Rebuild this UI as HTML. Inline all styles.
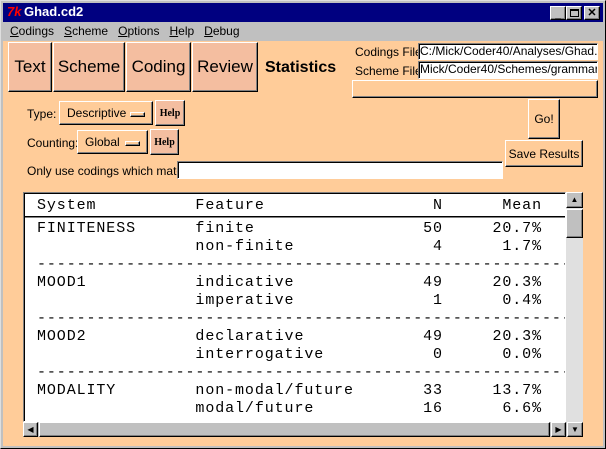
<!DOCTYPE html>
<html><head><style>
*{margin:0;padding:0;box-sizing:border-box}
body{width:606px;height:449px;background:#c0c0c0;position:relative;overflow:hidden;font-family:"Liberation Sans",sans-serif;font-size:12px}
.a{position:absolute}
.r{border:1px solid;border-color:#fff #000 #000 #fff;box-shadow:inset -1px -1px 0 #808080}
.s{border:1px solid;border-color:#808080 #fff #fff #808080;box-shadow:inset 1px 1px 0 #000}
.tab{background:#f4bea0;font-size:17px;display:flex;align-items:center;justify-content:center;color:#000}
.btn{background:#ffcc99;display:flex;align-items:center;justify-content:center}
.mono{font-family:"Liberation Mono",monospace;font-size:15px;letter-spacing:0.9px;white-space:pre}
.in{background:#fff;overflow:hidden;white-space:nowrap;font-size:12px;padding-left:1px;line-height:15px}
</style></head><body>
<div class="a" style="left:0;top:0;width:606px;height:449px;border:1px solid;border-color:#dfdfdf #000 #000 #dfdfdf"></div>
<div class="a" style="left:3px;top:3px;width:600px;height:19px;background:#000080"></div>
<div class="a" style="left:7px;top:4px;color:#f00;font-weight:bold;font-size:13px;font-style:italic">7k</div>
<div class="a" style="left:24px;top:4px;color:#fff;font-weight:bold;font-size:13px">Ghad.cd2</div>
<div class="a r" style="left:550px;top:6px;width:16px;height:14px;background:#c0c0c0;font-size:10px;text-align:center;font-weight:bold;line-height:16px">_</div>
<div class="a r" style="left:566px;top:6px;width:16px;height:14px;background:#c0c0c0"><div class="a" style="left:3px;top:2px;width:9px;height:8px;border:1px solid #000;border-top-width:2px"></div></div>
<div class="a r" style="left:584px;top:6px;width:16px;height:14px;background:#c0c0c0;font-size:11px;text-align:center;font-weight:bold;line-height:12px">✕</div>
<div class="a" style="left:10px;top:24px;font-size:12px;word-spacing:0"><u>C</u>odings&nbsp;&nbsp; <u>S</u>cheme&nbsp;&nbsp; <u>O</u>ptions&nbsp;&nbsp; <u>H</u>elp&nbsp;&nbsp; <u>D</u>ebug</div>
<div class="a" style="left:3px;top:41px;width:600px;height:405px;background:#ffcc99"></div>
<div class="a tab r" style="left:8px;top:42px;width:44px;height:50px">Text</div>
<div class="a tab r" style="left:53px;top:42px;width:72px;height:50px">Scheme</div>
<div class="a tab r" style="left:126px;top:42px;width:65px;height:50px">Coding</div>
<div class="a tab r" style="left:192px;top:42px;width:66px;height:50px">Review</div>
<div class="a" style="left:265px;top:59px;font-size:16px;font-weight:bold">Statistics</div>
<div class="a" style="left:355px;top:45px">Codings File:</div>
<div class="a" style="left:355px;top:64px">Scheme File:</div>
<div class="a in s" style="left:418px;top:43px;width:180px;height:17px">C:/Mick/Coder40/Analyses/Ghad.cd2</div>
<div class="a in s" style="left:418px;top:61px;width:180px;height:18px">Mick/Coder40/Schemes/grammar.sch</div>
<div class="a r" style="left:352px;top:80px;width:246px;height:18px;background:#ffcc99"></div>
<div class="a" style="left:27px;top:107px">Type:</div>
<div class="a btn r" style="left:59px;top:101px;width:94px;height:24px;justify-content:flex-start;padding-left:7px">Descriptive<div class="a r" style="left:70px;top:10px;width:15px;height:5px;background:#ffcc99"></div></div>
<div class="a btn r" style="left:155px;top:100px;width:30px;height:26px;background:#f4bea0;font-family:'Liberation Serif',serif;font-size:10px;font-weight:bold">Help</div>
<div class="a" style="left:27px;top:136px">Counting:</div>
<div class="a btn r" style="left:77px;top:130px;width:71px;height:24px;justify-content:flex-start;padding-left:7px">Global<div class="a r" style="left:47px;top:10px;width:15px;height:5px;background:#ffcc99"></div></div>
<div class="a btn r" style="left:150px;top:129px;width:29px;height:26px;background:#f4bea0;font-family:'Liberation Serif',serif;font-size:10px;font-weight:bold">Help</div>
<div class="a btn r" style="left:528px;top:99px;width:32px;height:40px">Go!</div>
<div class="a btn r" style="left:505px;top:140px;width:78px;height:27px">Save Results</div>
<div class="a" style="left:27px;top:164px">Only use codings which match:</div>
<div class="a s" style="left:177px;top:161px;width:326px;height:18px;background:#fff"></div>
<div class="a s" style="left:23px;top:192px;width:543px;height:230px;background:#fff;overflow:hidden">
<div class="a" style="left:1px;top:23px;width:545px;height:2px;background:#000;border-bottom:1px solid #808080"></div>
<div class="a mono" style="left:13px;top:4px;line-height:18px">System          Feature                 N      Mean</div>
<div class="a mono" style="left:13px;top:27px;line-height:18px">FINITENESS      finite                 50     20.7%
                non-finite              4      1.7%
-------------------------------------------------------
MOOD1           indicative             49     20.3%
                imperative              1      0.4%
-------------------------------------------------------
MOOD2           declarative            49     20.3%
                interrogative           0      0.0%
-------------------------------------------------------
MODALITY        non-modal/future       33     13.7%
                modal/future           16      6.6%</div>
</div>
<div class="a" style="left:566px;top:192px;width:17px;height:230px;background:#e0e0e0"></div>
<div class="a r" style="left:566px;top:192px;width:17px;height:16px;background:#c0c0c0;font-size:8px;text-align:center;line-height:14px">▲</div>
<div class="a r" style="left:566px;top:209px;width:17px;height:29px;background:#c0c0c0"></div>
<div class="a" style="left:23px;top:422px;width:560px;height:15px;background:#c0c0c0"></div>
<div class="a r" style="left:23px;top:422px;width:15px;height:15px;background:#c0c0c0;font-size:8px;text-align:center;line-height:13px">◀</div>
<div class="a r" style="left:39px;top:422px;width:511px;height:15px;background:#c0c0c0"></div>
<div class="a r" style="left:551px;top:422px;width:15px;height:15px;background:#c0c0c0;font-size:8px;text-align:center;line-height:13px">▶</div>
<div class="a r" style="left:567px;top:422px;width:16px;height:15px;background:#c0c0c0;font-size:8px;text-align:center;line-height:13px">▼</div>
</body></html>
